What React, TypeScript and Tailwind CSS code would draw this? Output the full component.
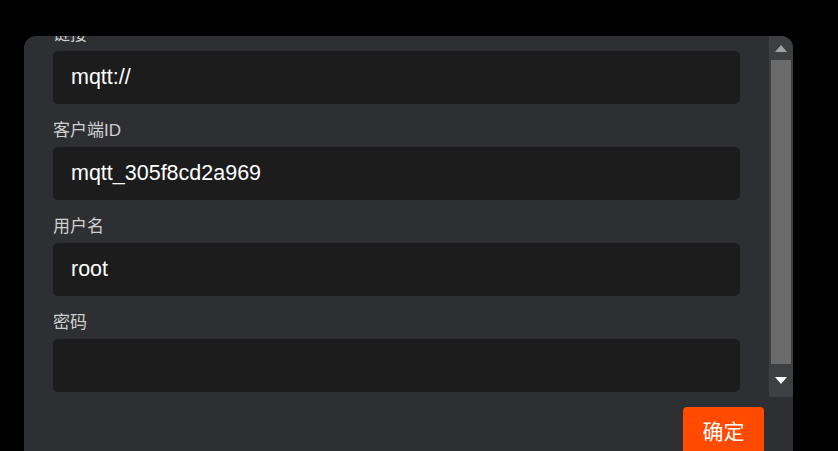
import React from 'react';

type Field = { label: string; value: string };

const fields: Field[] = [
  { label: '链接', value: 'mqtt://' },
  { label: '客户端ID', value: 'mqtt_305f8cd2a969' },
  { label: '用户名', value: 'root' },
  { label: '密码', value: '' },
];

const font = { fontFamily: '"Liberation Sans", Arial, "Noto Sans CJK SC", sans-serif' };

function FormField({ label, value }: Field) {
  return (
    <div className="mb-[15px] flex flex-col">
      <label className="mb-[4px] text-[17px] leading-[24px] text-[#cfcfcf]">{label}</label>
      <div className="flex h-[53px] items-center rounded-[5px] bg-[#1c1c1c] px-[18px] text-[21.5px] text-white">
        {value}
      </div>
    </div>
  );
}

function Scrollbar() {
  return (
    <div className="flex w-[24px] shrink-0 flex-col bg-[#3e3f41]">
      <div className="flex h-[24px] items-center justify-center">
        <svg width="12" height="7" viewBox="0 0 12 7">
          <path d="M0 7 L6 0 L12 7 Z" fill="#a3a3a3" />
        </svg>
      </div>
      <div className="mx-[2px] h-[304px] bg-[#6b6b6b]" />
      <div className="flex flex-1 items-center justify-center">
        <svg width="12" height="7" viewBox="0 0 12 7">
          <path d="M0 0 L12 0 L6 7 Z" fill="#ffffff" />
        </svg>
      </div>
    </div>
  );
}

export default function App() {
  return (
    <div className="h-[451px] w-[838px] overflow-hidden bg-black pt-[36px] pl-[24px]" style={font}>
      <div className="flex h-[470px] w-[769px] flex-col overflow-hidden rounded-t-[12px] bg-[#2e2f33]">
        <div className="flex h-[361px] shrink-0">
          <div className="flex-1 overflow-hidden px-[29px]">
            <div className="mt-[-13px]">
              {fields.map((f) => (
                <FormField key={f.label} {...f} />
              ))}
            </div>
          </div>
          <Scrollbar />
        </div>
        <div className="flex justify-end px-[29px] pt-[10px]">
          <button className="flex h-[50px] w-[81px] items-center justify-center rounded-[4px] bg-[#ff4a00] text-[21px] text-white">
            确定
          </button>
        </div>
      </div>
    </div>
  );
}
